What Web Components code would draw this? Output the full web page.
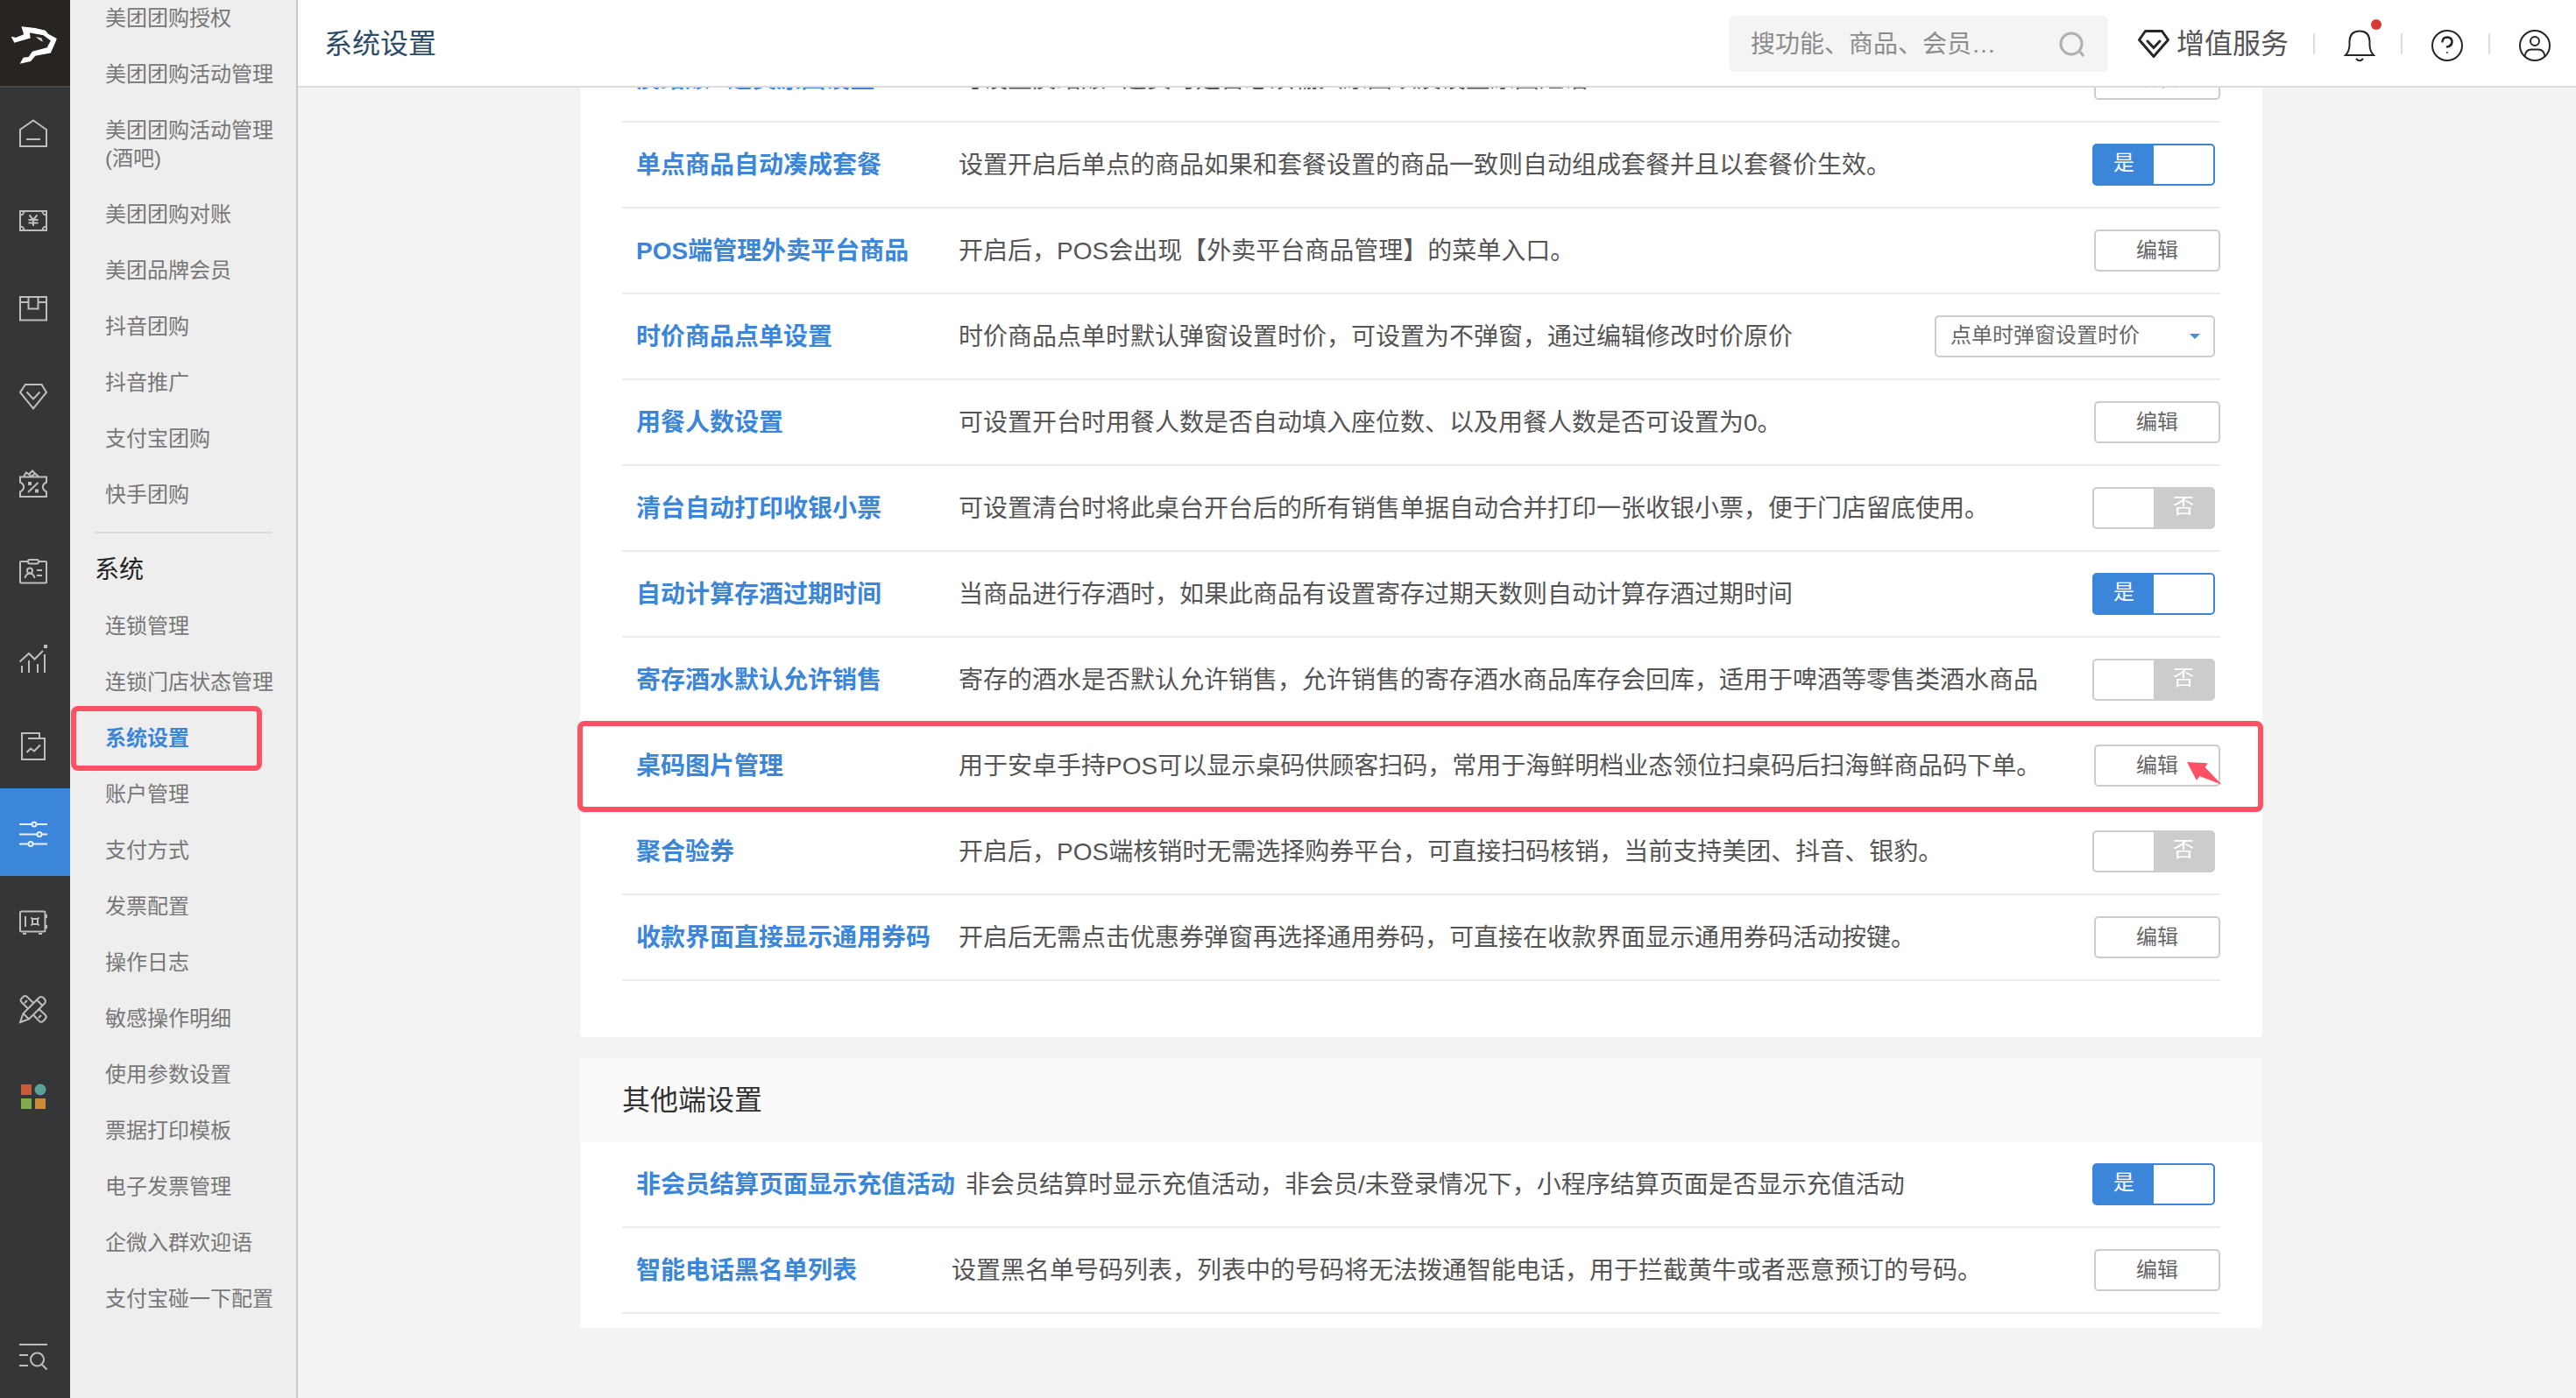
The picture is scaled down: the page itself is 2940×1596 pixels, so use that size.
<!DOCTYPE html>
<html lang="zh-CN">
<head>
<meta charset="utf-8">
<title>系统设置</title>
<style>
  html, body { margin: 0; height: 100%; }
  body {
    font-family: "Liberation Sans", "Noto Sans CJK SC", sans-serif;
    font-size: 28px;
    color: #555;
    background: #f3f3f3;
    overflow: hidden;
    --blue: #3b86d8;
    --mark: #ff5163;
    --line: #ccc;
  }
</style>
</head>
<body>
<app-shell>
  <icon-rail slot="rail"></icon-rail>
  <side-menu slot="menu">
    <menu-item>美团团购授权</menu-item>
    <menu-item>美团团购活动管理</menu-item>
    <menu-item>美团团购活动管理(酒吧)</menu-item>
    <menu-item>美团团购对账</menu-item>
    <menu-item>美团品牌会员</menu-item>
    <menu-item>抖音团购</menu-item>
    <menu-item>抖音推广</menu-item>
    <menu-item>支付宝团购</menu-item>
    <menu-item>快手团购</menu-item>
    <menu-heading>系统</menu-heading>
    <menu-item>连锁管理</menu-item>
    <menu-item>连锁门店状态管理</menu-item>
    <menu-item active>系统设置</menu-item>
    <menu-item>账户管理</menu-item>
    <menu-item>支付方式</menu-item>
    <menu-item>发票配置</menu-item>
    <menu-item>操作日志</menu-item>
    <menu-item>敏感操作明细</menu-item>
    <menu-item>使用参数设置</menu-item>
    <menu-item>票据打印模板</menu-item>
    <menu-item>电子发票管理</menu-item>
    <menu-item>企微入群欢迎语</menu-item>
    <menu-item>支付宝碰一下配置</menu-item>
  </side-menu>
  <top-bar slot="top">系统设置</top-bar>

  <settings-card class="main">
    <setting-row name="反结账&amp;退货原因设置">可设置反结账&amp;退货时是否必须输入原因以及设置原因短语<edit-button slot="control"></edit-button></setting-row>
    <setting-row name="单点商品自动凑成套餐">设置开启后单点的商品如果和套餐设置的商品一致则自动组成套餐并且以套餐价生效。<toggle-switch slot="control" on name="单点商品自动凑成套餐"></toggle-switch></setting-row>
    <setting-row name="POS端管理外卖平台商品">开启后，POS会出现【外卖平台商品管理】的菜单入口。<edit-button slot="control"></edit-button></setting-row>
    <setting-row name="时价商品点单设置">时价商品点单时默认弹窗设置时价，可设置为不弹窗，通过编辑修改时价原价<drop-select slot="control" name="时价商品点单设置" value="点单时弹窗设置时价"></drop-select></setting-row>
    <setting-row name="用餐人数设置">可设置开台时用餐人数是否自动填入座位数、以及用餐人数是否可设置为0。<edit-button slot="control"></edit-button></setting-row>
    <setting-row name="清台自动打印收银小票">可设置清台时将此桌台开台后的所有销售单据自动合并打印一张收银小票，便于门店留底使用。<toggle-switch slot="control" name="清台自动打印收银小票"></toggle-switch></setting-row>
    <setting-row name="自动计算存酒过期时间">当商品进行存酒时，如果此商品有设置寄存过期天数则自动计算存酒过期时间<toggle-switch slot="control" on name="自动计算存酒过期时间"></toggle-switch></setting-row>
    <setting-row name="寄存酒水默认允许销售">寄存的酒水是否默认允许销售，允许销售的寄存酒水商品库存会回库，适用于啤酒等零售类酒水商品<toggle-switch slot="control" name="寄存酒水默认允许销售"></toggle-switch></setting-row>
    <setting-row name="桌码图片管理" marked>用于安卓手持POS可以显示桌码供顾客扫码，常用于海鲜明档业态领位扫桌码后扫海鲜商品码下单。<edit-button slot="control" pointed></edit-button></setting-row>
    <setting-row name="聚合验券">开启后，POS端核销时无需选择购券平台，可直接扫码核销，当前支持美团、抖音、银豹。<toggle-switch slot="control" name="聚合验券"></toggle-switch></setting-row>
    <setting-row name="收款界面直接显示通用券码">开启后无需点击优惠券弹窗再选择通用券码，可直接在收款界面显示通用券码活动按键。<edit-button slot="control"></edit-button></setting-row>
  </settings-card>

  <settings-card heading="其他端设置">
    <setting-row name="非会员结算页面显示充值活动">非会员结算时显示充值活动，非会员/未登录情况下，小程序结算页面是否显示充值活动<toggle-switch slot="control" on name="非会员结算页面显示充值活动"></toggle-switch></setting-row>
    <setting-row name="智能电话黑名单列表">设置黑名单号码列表，列表中的号码将无法拨通智能电话，用于拦截黄牛或者恶意预订的号码。<edit-button slot="control"></edit-button></setting-row>
  </settings-card>
</app-shell>

<script>
const define = (name, render) => customElements.define(name, class extends HTMLElement {
  connectedCallback() {
    if (this.shadowRoot) return;
    this.attachShadow({ mode: 'open' }).innerHTML = render(this);
  }
});

/* Page frame: icon rail, menu column, header over the scrolled content */
define('app-shell', () => `
  <style>
    :host { display: grid; grid-template: 100px minmax(0, 1fr) / 80px 260px minmax(0, 1fr); height: 100vh; }
    .rail, .menu { grid-row: 1 / 3; display: grid; min-height: 0; }
    .top { display: grid; }
    main { overflow: hidden; padding-right: 36px; display: flex; flex-direction: column; align-items: center; gap: 24px; }
    ::slotted(settings-card) { width: 100%; max-width: 1920px; flex: none; }
    ::slotted(settings-card.main) { margin-top: -58px; }
  </style>
  <div class="rail"><slot name="rail"></slot></div>
  <div class="menu"><slot name="menu"></slot></div>
  <div class="top"><slot name="top"></slot></div>
  <main><slot></slot></main>`);

const ICONS = [
  ['首页', '<path d="M16 1.500L31 12V31H1V12ZM8 23H24"/>'],
  ['收银', '<path d="M1 5H31V27H1ZM1 9.500A4.500 4.500 0 0 0 5.500 5M26.500 5A4.500 4.500 0 0 0 31 9.500M31 22.500A4.500 4.500 0 0 0 26.500 27M5.500 27A4.500 4.500 0 0 0 1 22.500M11.500 9.500L16 15L20.500 9.500M16 15V22M10.500 15H21.500M10.500 18.500H21.500"/>'],
  ['商品', '<path d="M1 3H31V29.500H1ZM1 9H10.500M21.500 9H31M10.500 3V16.500H21.500V3"/>'],
  ['会员', '<path d="M7 3H25.500L31 12L16 30.500L1 12ZM8.500 11.500L16 19.500L23.500 11.500"/>'],
  ['营销', '<path d="M1 8.500H31V14.500C25.500 17 25.500 22.500 31 25.500V31H1V25.500C6.500 22.500 6.500 17 1 14.500ZM5 8L8 3.500L11 5.500L15 1.500L18 4.500L22 8M11 5.500L14 8L18 4.500M10 26L21.500 15"/><path class="f" d="M10 14h4v4h-4zM18 22.500h4v4h-4z"/>'],
  ['员工', '<rect x="1" y="5" width="30" height="24.500" rx="1"/><rect class="bg" x="10" y="3" width="12" height="4.500" rx="2"/><circle cx="12" cy="15.500" r="3"/><path d="M6.500 24C7 20.500 9 19 12 18.500C15 19 17 20.500 17.500 24M20 15H26M20 21H26"/>'],
  ['数据', '<path d="M.500 19.500L11 10L17.500 16.500L27 7M3 24V32M11 18V32M21 22V32M29 11V32"/><path class="f" d="M28 0h4v4h-4z"/>'],
  ['报表', '<path d="M3 1H23V7H29V31H3ZM10 7H23M8.500 23L13 18.500L17 21.500L24 14.500"/>'],
  ['设置', '<path d="M0 5H14.500M19.500 5H32M0 16.500H20.500M25.500 16.500H32M0 27.500H10.500M15.500 27.500H32"/><circle cx="17" cy="5" r="2.500"/><circle cx="23" cy="16.500" r="2.500"/><circle cx="13" cy="27.500" r="2.500"/>'],
  ['资金', '<rect x="1" y="4.500" width="28.500" height="23" rx="1.500"/><path d="M7 10V22M15 13H21V19H15ZM13.500 11.500L15 13M22.500 11.500L21 13M13.500 20.500L15 19M22.500 20.500L21 19M31 8V12M31 20V24M4 30H8M22 30H26"/>'],
  ['工具', '<path d="M1 31L4.500 21L22 3.500Q25 .500 28 3.500Q31.500 7 28.500 10L11 27.500ZM4.500 21L11 27.500M20 5.500L26.500 12M10 15.500L2.500 8Q.500 6 3 3.500L5 1.500Q7 .500 9 2L16 9M6 9L9 6M22.500 16L29.500 22.500Q32 25 29.500 27.500L27.500 29.500Q25 32 22.500 29.500L16 22.500M22 26L25 23"/>'],
  ['应用', '<path fill="#c75b35" stroke="none" d="M2 2h12v12H2z"/><circle fill="#5aa296" stroke="none" cx="24" cy="8" r="6.500"/><path fill="#80ab4f" stroke="none" d="M2 18h12v12H2z"/><path fill="#cc8b35" stroke="none" d="M18 18h12v12H18z"/>'],
];
const FIND = ['查找', '<path d="M0 3H32M0 15H10M0 27H10M26 26L31.500 31.500"/><circle cx="20.500" cy="20" r="7.500"/>'];
const railLink = ([label, art], active) =>
  `<a href="#" aria-label="${label}"${active ? ' class="on"' : ''}><svg viewBox="0 0 32 32">${art}</svg></a>`;

define('icon-rail', () => `
  <style>
    :host { display: flex; flex-direction: column; background: #343638; min-height: 0; }
    .logo { height: 98px; border-bottom: 2px solid #484a4c; background: #272422; }
    .logo svg { width: 80px; height: 98px; display: block; }
    nav { flex: 1; display: flex; flex-direction: column; }
    a { height: 100px; box-sizing: border-box; padding: 36px 0 0 22px; color: #bcbebf; flex: none; }
    a.on { background: var(--blue); color: #e6f0fb; }
    a:last-child { margin-top: auto; }
    a svg { width: 32px; height: 32px; display: block; fill: none; stroke: currentColor; stroke-width: 2; overflow: visible; }
    .f { fill: currentColor; stroke: none; }
    .bg { fill: #343638; }
  </style>
  <div class="logo"><svg viewBox="0 0 240 294"><path fill="#fff" stroke="#fff" stroke-width="4" d="M42 128L54 131L84 119L76 93L120 98L154 106L164 118L192 133L188 144L172 180L120 189L104 208L72 215L81 199L99 197L112 178L162 165L176 139L150 119L99 110L102 129L50 144Z"/><path fill="#ccc" d="M122 126L142 130L147 143L136 138Z"/></svg></div>
  <nav>${ICONS.map((icon, i) => railLink(icon, i === 8)).join('')}${railLink(FIND)}</nav>`);

/* The menu is longer than the window and stays scrolled to its end */
define('side-menu', () => `
  <style>
    :host { display: flex; flex-direction: column; justify-content: flex-end; box-sizing: border-box; min-height: 0; height: 100vh; overflow: hidden;
      padding: 0 28px 81px; background: #eee; border-right: 2px solid #c9c9c9; }
  </style><slot></slot>`);

define('menu-item', el => `
  <style>
    :host { display: block; position: relative; flex: none; }
    a { display: block; padding: 16px 0 16px 12px; font-size: 24px; line-height: 32px; color: #777; text-decoration: none; margin-right: -4px; }
    :host([active]) a { color: var(--blue); font-weight: bold; }
    .mark { position: absolute; inset: -5px 11px -5px -27px; border: 6px solid var(--mark); border-radius: 8px; pointer-events: none; }
  </style>
  <a href="#"><slot></slot></a>${el.hasAttribute('active') ? '<div class="mark"></div>' : ''}`);

define('menu-heading', () => `
  <style>
    :host { display: block; flex: none; margin-top: 10px; border-top: 2px solid #d9d9d9; }
    h2 { margin: 0; padding: 22px 0 12px; font-size: 28px; line-height: 40px; font-weight: normal; color: #222; }
  </style>
  <h2><slot></slot></h2>`);

define('top-bar', () => `
  <style>
    :host { display: flex; align-items: center; box-sizing: border-box; height: 100px; background: #fff; border-bottom: 2px solid #dcdcdc; padding: 2px 0 0 30px; }
    h1 { margin: 0; flex: 1; font-size: 32px; line-height: 48px; font-weight: normal; color: #2c4b68; }
    .search { display: flex; align-items: center; box-sizing: border-box; width: 432px; height: 64px; padding: 0 26px 0 24px; background: #f4f4f4; border-radius: 6px; }
    input { flex: 1; min-width: 0; padding: 2px 0 0; border: 0; outline: 0; background: none; font: inherit; font-size: 28px; color: #555; }
    input::placeholder { color: #8c8c8c; opacity: 1; }
    svg { display: block; fill: none; stroke: #262626; stroke-width: 2; overflow: visible; }
    .search svg { width: 30px; height: 30px; stroke: #b0b0b0; stroke-width: 3; }
    .vip { display: flex; align-items: center; gap: 8px; margin: 0 28px 0 34px; padding: 0; border: 0; background: none; font: inherit; font-size: 32px; line-height: 48px; color: #555; }
    .vip svg { width: 36px; height: 32px; stroke-width: 3; }
    .cell { display: flex; align-items: center; justify-content: center; width: 100px; height: 24px; box-sizing: border-box; padding: 0 0 0 4px; border: 0; border-left: 2px solid #ddd; background: none; }
    .cell svg { width: 36px; height: 36px; margin-top: 4px; }
  </style>
  <h1><slot></slot></h1>
  <label class="search"><input type="text" placeholder="搜功能、商品、会员…" aria-label="搜索">
    <svg viewBox="0 0 30 30"><circle cx="14" cy="15" r="12"/><path d="M23 23L28 29"/></svg></label>
  <button class="vip"><svg viewBox="0 0 36 32"><path stroke-linejoin="round" d="M8.500 1.500H27.500L34.500 11.500L18 30.500L1.500 11.500Z"/><path stroke-linecap="round" d="M11 13L18 20.500L25 13"/></svg>增值服务</button>
  <button class="cell" aria-label="通知"><svg viewBox="0 0 36 36"><path d="M2 29Q6 25 6.500 18V13Q7 1.500 18 1.500Q29 1.500 29.500 13V18Q30 25 34 29ZM14 33Q18 37.500 22 33"/><circle cx="37" cy="-6" r="6" fill="#d83933" stroke="none"/></svg></button>
  <button class="cell" aria-label="帮助"><svg viewBox="0 0 36 36"><circle cx="18" cy="18" r="17"/><path stroke-width="2.500" stroke-linecap="round" d="M12.500 13.500Q13 8.500 18 8.500Q23.500 9 23.500 14Q23 18.500 18 19.500"/><circle cx="18" cy="26" r="1" fill="#262626" stroke="none"/></svg></button>
  <button class="cell" aria-label="账户"><svg viewBox="0 0 36 36"><circle cx="18" cy="18" r="17"/><circle cx="18" cy="13" r="5"/><path d="M6.500 30.500Q7.500 22.500 14 22.500H22Q28.500 22.500 29.500 30.500"/></svg></button>`);

define('settings-card', el => `
  <style>
    :host { display: block; background: #fff; border-radius: 4px; overflow: visible; --name-width: 356px; }
    :host([heading]) { --name-width: 348px; }
    h2 { margin: 0; padding: 24px 48px; font-size: 32px; line-height: 48px; font-weight: normal; color: #333; background: #fafafa; }
    .rows { padding: 0 48px 64px; }
    :host([heading]) .rows { padding-bottom: 16px; }
  </style>
  ${el.hasAttribute('heading') ? `<h2>${el.getAttribute('heading')}</h2>` : ''}
  <div class="rows"><slot></slot></div>`);

define('setting-row', el => `
  <style>
    :host { display: flex; align-items: center; position: relative; box-sizing: border-box; height: 98px; padding-left: 16px; gap: 12px; border-bottom: 2px solid #ececec; }
    a { min-width: var(--name-width); font-weight: bold; color: var(--blue); text-decoration: none; white-space: nowrap; }
    p { margin: 0; flex: 1; white-space: nowrap; }
    a, p { padding-top: 2px; line-height: 40px; }
    .mark { position: absolute; inset: -3px -49px -5px -51px; border: 6px solid var(--mark); border-radius: 8px; pointer-events: none; }
  </style>
  <a href="#">${el.getAttribute('name').replace('&', '&amp;')}</a>
  <p><slot></slot></p>
  <slot name="control"></slot>
  ${el.hasAttribute('marked') ? '<div class="mark"></div>' : ''}`);

define('edit-button', el => `
  <style>
    :host { display: block; position: relative; }
    button { display: block; box-sizing: border-box; width: 144px; height: 48px; padding: 0; border: 2px solid var(--line); border-radius: 5px; background: #fff; font: inherit; font-size: 24px; line-height: 40px; color: #666; }
    svg { position: absolute; left: 106px; top: 20px; width: 40px; height: 26px; fill: var(--mark); }
  </style>
  <button>编辑</button>
  ${el.hasAttribute('pointed') ? '<svg viewBox="0 0 120 78"><path d="M0 0L71 4L62 18L119 77L43 48L33 63Z"/></svg>' : ''}`);

define('toggle-switch', el => {
  const on = el.hasAttribute('on');
  return `
  <style>
    :host { display: block; margin-right: 6px; --fill: var(--line); }
    :host([on]) { --fill: var(--blue); }
    label { display: grid; grid-template-columns: 1fr 1fr; grid-template-rows: 44px; box-sizing: border-box; width: 140px; height: 48px; border: 2px solid var(--fill); border-radius: 5px; background: #fff; }
    input { appearance: none; margin: 0; grid-area: 1 / 2; background: var(--fill); }
    span { grid-area: 1 / 2; text-align: center; font-size: 24px; line-height: 40px; color: #fff; pointer-events: none; }
    :host([on]) input, :host([on]) span { grid-area: 1 / 1; }
  </style>
  <label><input type="checkbox"${on ? ' checked' : ''} aria-label="${el.getAttribute('name')}"><span>${on ? '是' : '否'}</span></label>`;
});

define('drop-select', el => `
  <style>
    :host { display: grid; align-items: center; margin-right: 6px; }
    select, svg { grid-area: 1 / 1; }
    select { appearance: none; box-sizing: border-box; width: 320px; height: 48px; padding: 0 40px 4px 16px; border: 2px solid var(--line); border-radius: 5px; background: #fff; font: inherit; font-size: 24px; color: #666; }
    svg { justify-self: end; width: 12px; height: 6px; margin-right: 17px; fill: #3a94d0; pointer-events: none; }
  </style>
  <select aria-label="${el.getAttribute('name')}"><option>${el.getAttribute('value')}</option></select>
  <svg viewBox="0 0 12 6"><path d="M0 0H12L6 6Z"/></svg>`);
</script>
</body>
</html>
